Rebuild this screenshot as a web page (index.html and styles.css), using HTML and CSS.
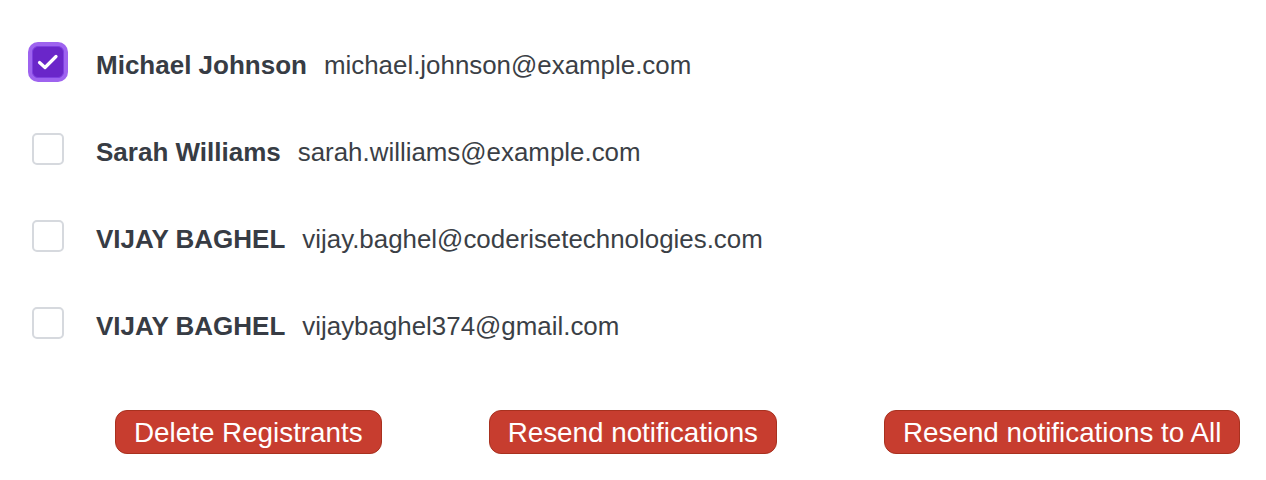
FILE: index.html
```html
<!DOCTYPE html>
<html lang="en">
<head>
<meta charset="utf-8">
<title>Registrants</title>
<link rel="stylesheet" href="styles.css">
</head>
<body>
<div class="page">
  <ul class="list">
    <li class="row">
      <span class="box checked">
        <svg width="32" height="32" viewBox="0 0 32 32"><path d="M7.5 16.5 L13 21.5 L24 10.5" fill="none" stroke="#fff" stroke-width="3.2" stroke-linecap="round" stroke-linejoin="round"/></svg>
      </span>
      <span class="name">Michael Johnson</span>
      <span class="email">michael.johnson@example.com</span>
    </li>
    <li class="row">
      <span class="box"></span>
      <span class="name">Sarah Williams</span>
      <span class="email">sarah.williams@example.com</span>
    </li>
    <li class="row">
      <span class="box"></span>
      <span class="name">VIJAY BAGHEL</span>
      <span class="email">vijay.baghel@coderisetechnologies.com</span>
    </li>
    <li class="row">
      <span class="box"></span>
      <span class="name">VIJAY BAGHEL</span>
      <span class="email">vijaybaghel374@gmail.com</span>
    </li>
  </ul>
  <div class="actions">
    <button class="btn">Delete Registrants</button>
    <button class="btn">Resend notifications</button>
    <button class="btn">Resend notifications to All</button>
  </div>
</div>
</body>
</html>
```
FILE: styles.css
```css
html, body {
  margin: 0;
  padding: 0;
  background: #ffffff;
}
body {
  font-family: "Liberation Sans", Arial, Helvetica, sans-serif;
  color: #374151;
}
.page {
  padding-top: 18px;
}
.list {
  list-style: none;
  margin: 0;
  padding: 0 0 0 32px;
}
.row {
  display: flex;
  align-items: center;
  height: 87px;
}
.box {
  flex: none;
  width: 32px;
  height: 32px;
  box-sizing: border-box;
  border: 2px solid #d6d9de;
  border-radius: 5px;
  background: #fff;
  margin-right: 32px;
  display: flex;
}
.box.checked {
  border: 1px solid #7e3fe0;
  background: #6a26c9;
  border-radius: 6px;
  box-shadow: 0 0 0 4px #9e63ef;
}
.box.checked svg {
  margin: -1px;
}
.name,
.email {
  padding-top: 7px;
}
.name {
  font-size: 26px;
  font-weight: 700;
  color: #373c44;
  margin-right: 17px;
}
.email {
  font-size: 25.9px;
  color: #3b3f46;
}
.actions {
  display: flex;
  gap: 107px;
  padding-left: 115px;
  margin-top: 44px;
}
.btn {
  font-family: "Liberation Sans", Arial, Helvetica, sans-serif;
  font-size: 27.8px;
  line-height: 32px;
  padding: 6px 18px 4px;
  border: 1px solid #a8311f;
  border-radius: 12px;
  background: #c73d2f;
  color: #ffffff;
  cursor: pointer;
}
```
